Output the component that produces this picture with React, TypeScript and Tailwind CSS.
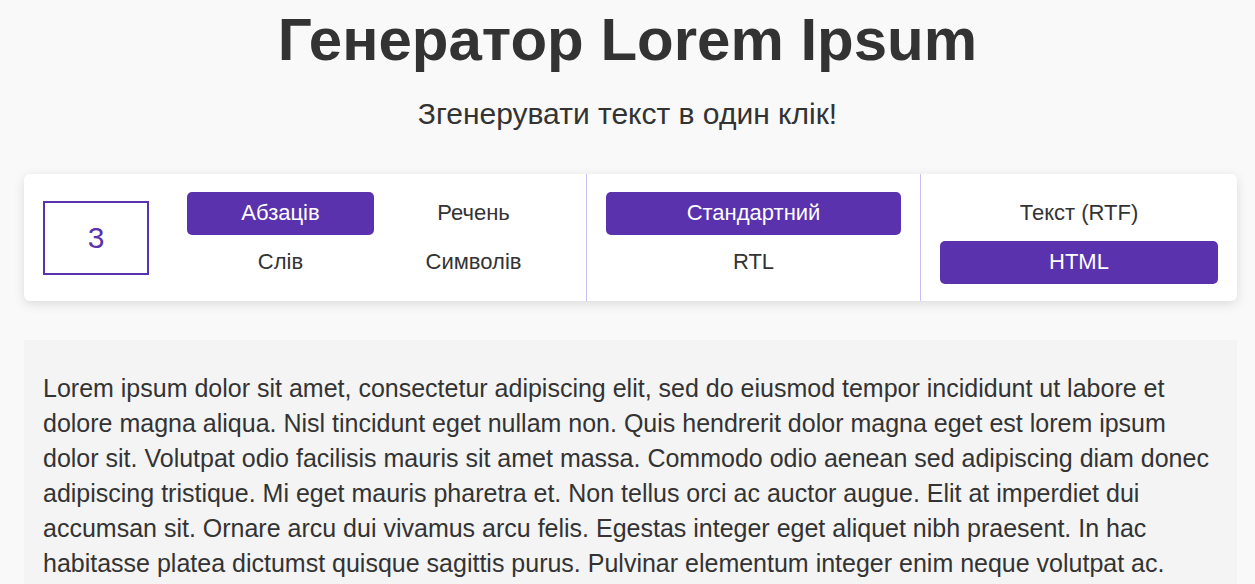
import { useState } from 'react';

const text =
  'Lorem ipsum dolor sit amet, consectetur adipiscing elit, sed do eiusmod tempor incididunt ut labore et dolore magna aliqua. Nisl tincidunt eget nullam non. Quis hendrerit dolor magna eget est lorem ipsum dolor sit. Volutpat odio facilisis mauris sit amet massa. Commodo odio aenean sed adipiscing diam donec adipiscing tristique. Mi eget mauris pharetra et. Non tellus orci ac auctor augue. Elit at imperdiet dui accumsan sit. Ornare arcu dui vivamus arcu felis. Egestas integer eget aliquet nibh praesent. In hac habitasse platea dictumst quisque sagittis purus. Pulvinar elementum integer enim neque volutpat ac. Tincidunt praesent semper feugiat nibh sed pulvinar proin gravida hendrerit.';

function Opt({ label, active, onClick }: { label: string; active: boolean; onClick: () => void }) {
  return (
    <button
      onClick={onClick}
      className={`h-[43px] w-full rounded-[5px] text-[22px] leading-none ${
        active ? 'bg-[#5a32ad] text-white' : 'bg-transparent text-[#333]'
      }`}
    >
      {label}
    </button>
  );
}

export default function App() {
  const [count, setCount] = useState('3');
  const [unit, setUnit] = useState('Абзаців');
  const [mode, setMode] = useState('Стандартний');
  const [format, setFormat] = useState('HTML');

  return (
    <main className="min-h-screen bg-[#f9f9f9] text-[#333] font-['Liberation_Sans',Arial,sans-serif]">
      <h1 className="pt-[4px] text-center text-[60px] font-bold leading-[72px]">Генератор Lorem Ipsum</h1>
      <p className="mt-[22px] text-center text-[30px] leading-[32px]">Згенерувати текст в один клік!</p>

      <div className="ml-[24px] mr-[18px] mt-[44px] flex h-[127px] rounded-[6px] bg-white shadow-[0_3px_12px_rgba(0,0,0,0.12)]">
        <div className="flex items-center px-[19px]">
          <input
            value={count}
            onChange={(e) => setCount(e.target.value)}
            className="h-[74px] w-[106px] border-2 border-[#5a32ad] text-center text-[30px] text-[#5a32ad] outline-none"
          />
          <div className="ml-[38px] grid w-[380px] grid-cols-2 gap-[6px]">
            {['Абзаців', 'Речень', 'Слів', 'Символів'].map((u) => (
              <Opt key={u} label={u} active={unit === u} onClick={() => setUnit(u)} />
            ))}
          </div>
        </div>

        <div className="flex w-[334px] flex-col justify-center gap-[6px] border-l border-[#cdbdf5] px-[19px]">
          {['Стандартний', 'RTL'].map((m) => (
            <Opt key={m} label={m} active={mode === m} onClick={() => setMode(m)} />
          ))}
        </div>

        <div className="flex flex-1 flex-col justify-center gap-[6px] border-l border-[#cdbdf5] px-[19px]">
          {['Текст (RTF)', 'HTML'].map((f) => (
            <Opt key={f} label={f} active={format === f} onClick={() => setFormat(f)} />
          ))}
        </div>
      </div>

      <div className="ml-[24px] mr-[18px] mt-[39px] bg-[#f4f4f4] px-[19px] pt-[31px] pb-[20px]">
        <p className="text-[25px] leading-[35px]">{text}</p>
      </div>
    </main>
  );
}
